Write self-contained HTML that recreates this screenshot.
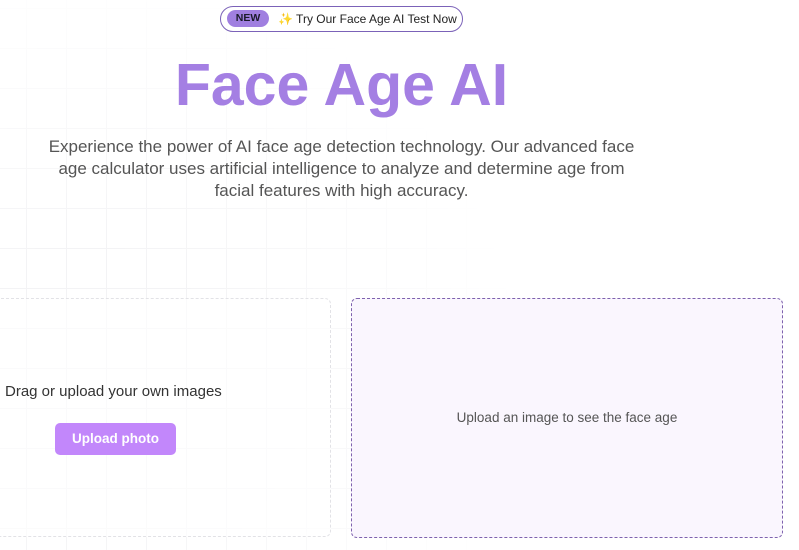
<!DOCTYPE html>
<html><head><style>
*{margin:0;padding:0;box-sizing:border-box}
body{width:799px;height:550px;overflow:hidden;background:#fff;font-family:"Liberation Sans",sans-serif;position:relative}
.grid{position:absolute;inset:0;background-image:linear-gradient(#f3f3f5 1px,transparent 1px),linear-gradient(90deg,#f3f3f5 1px,transparent 1px);background-size:40px 40px;background-position:26px 8px;-webkit-mask-image:radial-gradient(ellipse 450px 420px at 80px 380px,#000 30%,transparent 100%)}
.pill{position:absolute;left:220px;top:6px;width:243px;height:26px;border:1.5px solid #7b62b8;border-radius:13px;font-size:12px;color:#222;background:#fff}
.new{position:absolute;left:6px;top:3px;width:42px;height:17px;border-radius:9px;background:#a07fe0;font-weight:bold;font-size:10.5px;text-align:center;line-height:17px;color:#1a1a2a}
.pt{position:absolute;left:57px;top:5px;white-space:nowrap}
h1{position:absolute;left:0;width:683px;top:51px;text-align:center;font-size:59px;font-weight:bold;color:#a47fe3}
.p{position:absolute;left:41px;width:601px;top:136px;text-align:center;font-size:17px;line-height:22px;color:#555}
.lb{position:absolute;left:-10px;top:298px;width:341px;height:239px;border:1px dashed #e2e2e6;border-radius:6px;background:rgba(255,255,255,.6)}
.dr{position:absolute;left:5px;top:383px;font-size:15px;color:#333}
.btn{position:absolute;left:55px;top:423px;width:121px;height:32px;border-radius:5px;background:#c287fb;color:#fff;font-size:13.5px;font-weight:bold;text-align:center;line-height:32px}
.rb{position:absolute;left:351px;top:298px;width:432px;height:240px;border:1px dashed #7e62ae;border-radius:6px;background:#faf6fe}
.rt{position:absolute;left:0;right:0;top:111px;text-align:center;font-size:13.5px;color:#555}
</style></head><body>
<div class="grid"></div>
<div class="pill"><div class="new">NEW</div><div class="pt">✨ Try Our Face Age AI Test Now</div></div>
<h1>Face Age AI</h1>
<div class="p">Experience the power of AI face age detection technology. Our advanced face age calculator uses artificial intelligence to analyze and determine age from facial features with high accuracy.</div>
<div class="lb"></div>
<div class="dr">Drag or upload your own images</div>
<div class="btn">Upload photo</div>
<div class="rb"><div class="rt">Upload an image to see the face age</div></div>
</body></html>
